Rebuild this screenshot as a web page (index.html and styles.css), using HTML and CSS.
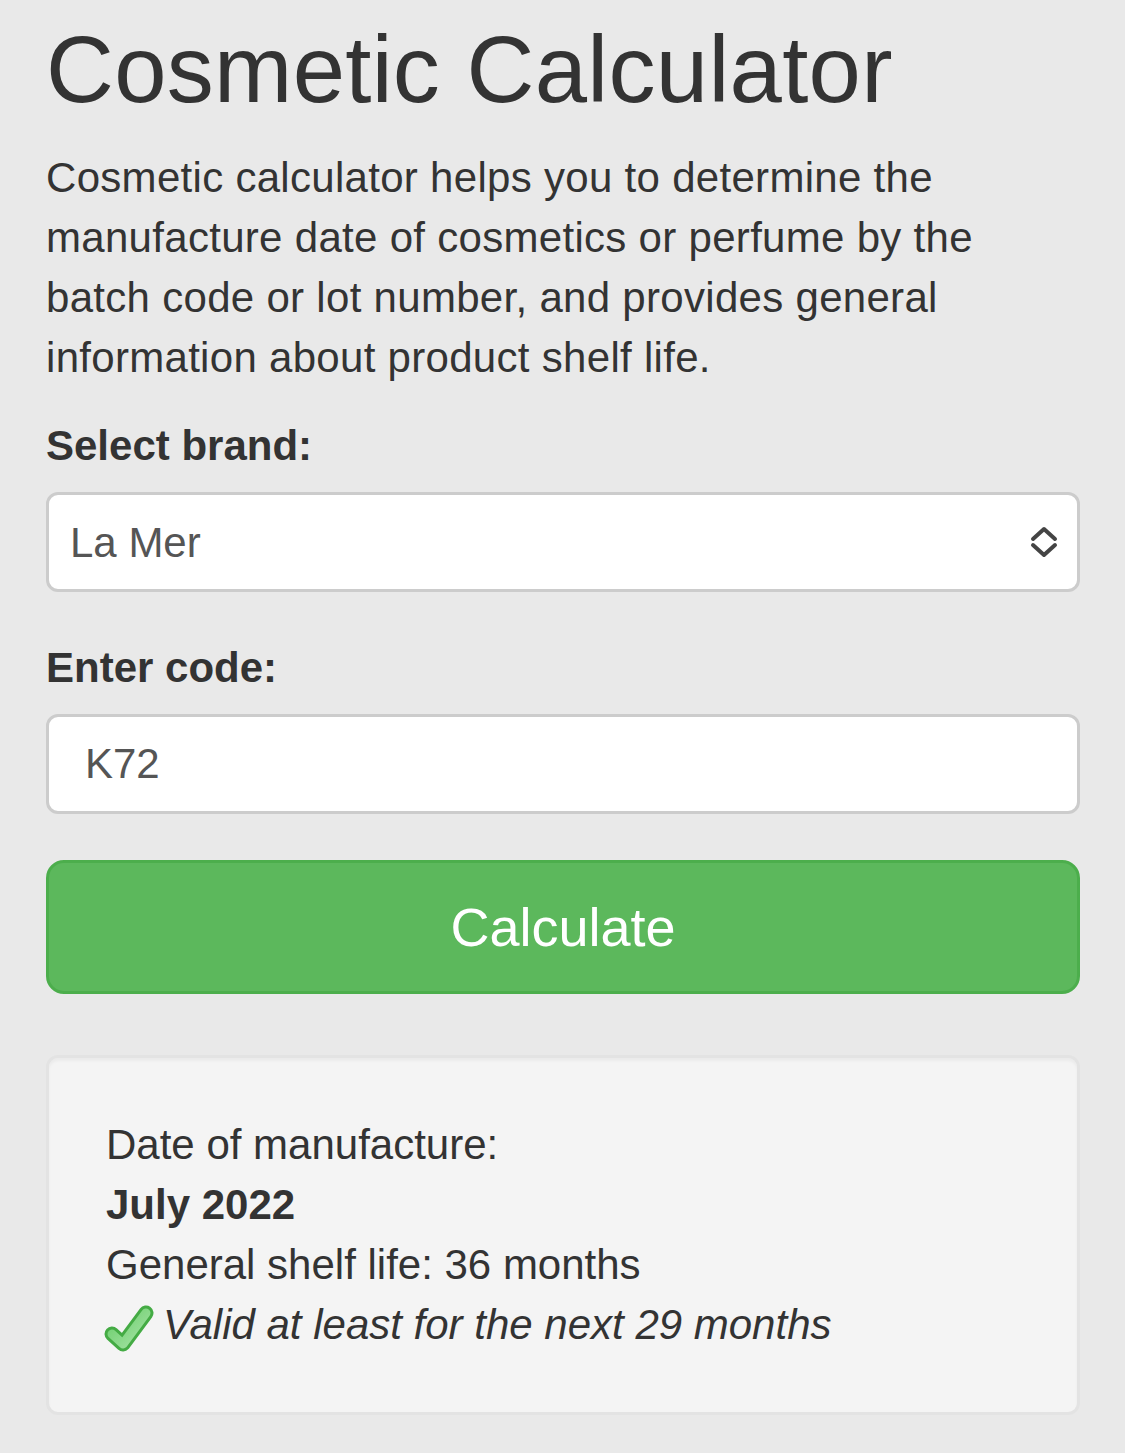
FILE: index.html
```html
<!DOCTYPE html>
<html lang="en">
<head>
<meta charset="utf-8">
<title>Cosmetic Calculator</title>
<link rel="stylesheet" href="styles.css">
</head>
<body>
<main class="container">
  <h1 class="title">Cosmetic Calculator</h1>
  <p class="intro">Cosmetic calculator helps you to determine the manufacture date of cosmetics or perfume by the batch code or lot number, and provides general information about product shelf life.</p>
  <form class="calc-form">
    <div class="form-group">
      <label class="form-label" for="brand">Select brand:</label>
      <div class="select-wrap">
        <select id="brand" class="form-control form-select">
          <option>La Mer</option>
        </select>
        <svg class="select-arrow" viewBox="0 0 28 32" width="28" height="32" aria-hidden="true">
          <path d="M3 13 L14 3 L25 13" fill="none" stroke="#444" stroke-width="4" stroke-linecap="round" stroke-linejoin="round"/>
          <path d="M3 19 L14 29 L25 19" fill="none" stroke="#444" stroke-width="4" stroke-linecap="round" stroke-linejoin="round"/>
        </svg>
      </div>
    </div>
    <div class="form-group form-group-code">
      <label class="form-label" for="code">Enter code:</label>
      <input id="code" class="form-control form-input" type="text" value="K72">
    </div>
    <button type="button" class="btn-success">Calculate</button>
  </form>
  <section class="well">
    <div class="result-line">Date of manufacture:</div>
    <div class="result-line result-date">July 2022</div>
    <div class="result-line">General shelf life: 36 months</div>
    <div class="result-line result-valid">
      <svg class="check-icon" viewBox="0 0 50 50" width="50" height="50" aria-hidden="true">
        <defs>
          <linearGradient id="chk" x1="0" y1="0" x2="1" y2="1">
            <stop offset="0" stop-color="#6acd6a"/>
            <stop offset="1" stop-color="#a6e3a6"/>
          </linearGradient>
        </defs>
        <path d="M8 30 L19 40 L42 9" fill="none" stroke="#44ab44" stroke-width="15" stroke-linecap="round" stroke-linejoin="round"/>
        <path d="M8 30 L19 40 L42 9" fill="none" stroke="url(#chk)" stroke-width="9" stroke-linecap="round" stroke-linejoin="round"/>
      </svg>
      <em class="valid-text">Valid at least for the next 29 months</em>
    </div>
  </section>
</main>
</body>
</html>
```
FILE: styles.css
```css
html, body {
  margin: 0;
  padding: 0;
}
body {
  background: #e9e9e9;
  color: #333;
  font-family: "Liberation Sans", Arial, Helvetica, sans-serif;
  font-size: 42px;
  line-height: 60px;
}
.container {
  padding: 18px 45px 40px 46px;
}
.title {
  margin: 0 0 27px;
  font-size: 94px;
  line-height: 103px;
  font-weight: 400;
  color: #333;
  letter-spacing: 0.3px;
}
.intro {
  margin: 0 0 28px;
  letter-spacing: 0.3px;
}
.calc-form {
  margin: 0;
}
.form-group {
  margin: 0 0 46px;
}
.form-label {
  display: block;
  font-weight: 700;
  margin-bottom: 16px;
}
.form-control {
  display: block;
  width: 100%;
  box-sizing: border-box;
  height: 100px;
  border: 3px solid #ccc;
  border-radius: 12px;
  background: #fff;
  color: #555;
  font-family: inherit;
  font-size: 42px;
  margin: 0;
  outline: none;
}
.select-wrap {
  position: relative;
}
.form-select {
  -webkit-appearance: none;
  appearance: none;
  padding: 0 80px 0 21px;
}
.select-arrow {
  position: absolute;
  right: 22px;
  top: 34px;
  pointer-events: none;
}
.form-input {
  padding: 0 36px;
}
.btn-success {
  display: block;
  width: 100%;
  height: 134px;
  box-sizing: border-box;
  background: #5cb85c;
  border: 3px solid #4cae4c;
  border-radius: 18px;
  color: #fff;
  font-family: inherit;
  font-size: 54px;
  line-height: 72px;
  padding: 0;
  margin: 0;
  cursor: pointer;
}
.well {
  margin-top: 61px;
  background: #f4f4f4;
  border: 3px solid #e3e3e3;
  border-radius: 12px;
  box-shadow: inset 0 3px 3px rgba(0, 0, 0, 0.04);
  padding: 57px;
}
.result-date {
  font-weight: 700;
}
.result-valid {
  display: flex;
  align-items: center;
  gap: 9px;
  margin-left: -2px;
}
.check-icon {
  display: block;
  flex: none;
  margin-top: 7px;
}
.valid-text {
  font-style: italic;
}
```
